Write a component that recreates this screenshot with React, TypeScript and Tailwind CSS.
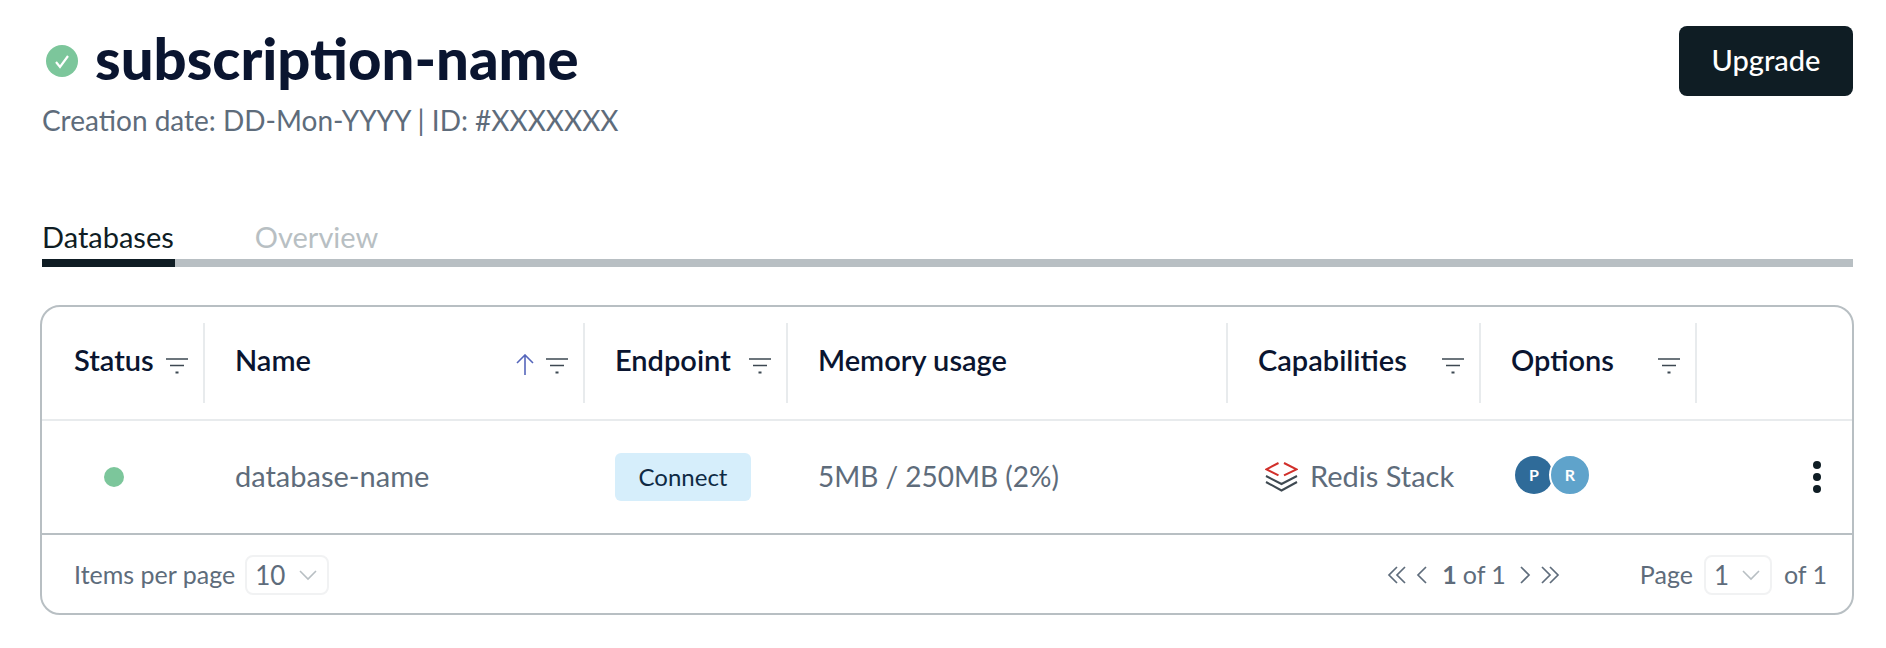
const columns = [
  { label: 'Status', width: 'w-[163px]', filter: true, first: true },
  { label: 'Name', width: 'w-[380px]', filter: true, sorted: true },
  { label: 'Endpoint', width: 'w-[203px]', filter: true },
  { label: 'Memory usage', width: 'w-[440px]', filter: false },
  { label: 'Capabilities', width: 'w-[253px]', filter: true },
  { label: 'Options', width: 'w-[216px]', filter: true },
];

function FilterIcon() {
  return (
    <svg width="22" height="16" viewBox="0 0 22 16" className="mt-[5px] shrink-0 text-[#3d4852]" fill="none" stroke="currentColor" strokeWidth="1.6">
      <path d="M0 1h22M4 7.500h14" />
      <path d="M9.500 14.500h3" strokeWidth="2.200" />
    </svg>
  );
}

function SortUpIcon() {
  return (
    <svg width="20" height="21" viewBox="0 0 20 21" className="mt-[3px] shrink-0 text-[#5566bb]" fill="none" stroke="currentColor" strokeWidth="1.6">
      <path d="M10 21V1M2 9l8-8 8 8" />
    </svg>
  );
}

function Chevron({ dir, double }: { dir: 'left' | 'right'; double?: boolean }) {
  const flip = dir === 'right' ? 'scale-x-[-1]' : '';
  return (
    <svg width={double ? 19 : 11} height="18" viewBox={double ? '0 0 19 18' : '0 0 11 18'} className={`text-[#5e6c7b] ${flip}`} fill="none" stroke="currentColor" strokeWidth="1.7">
      <path d="M10 1 2 9l8 8" />
      {double && <path d="M18 1 10 9l8 8" />}
    </svg>
  );
}

function SmallSelect({ value, width }: { value: string; width: string }) {
  return (
    <div className={`flex h-10 ${width} items-center justify-between rounded-lg border-2 border-[#f1f2f3] pl-2 pr-[10px] text-[26px] text-[#5e6c7b]`}>
      <span>{value}</span>
      <svg width="18" height="11" viewBox="0 0 18 11" fill="none" stroke="#b8bfc3" strokeWidth="1.6">
        <path d="m1 1 8 8 8-8" />
      </svg>
    </div>
  );
}

function RedisIcon() {
  return (
    <svg width="33" height="30" viewBox="0 0 33 30" fill="none" strokeWidth="2">
      <path d="M13.500 1 1.500 7.300l12 6M19 1l12.500 6.300-12.500 6" stroke="#d12f2a" />
      <path d="m1 14 15.500 8L32 14" stroke="#3f4a52" />
      <path d="m1 20 15.500 8.500L32 20" stroke="#3f4a52" />
    </svg>
  );
}

export default function App() {
  return (
    <div className="h-[648px] w-full bg-white pl-[40px] pr-[32px] pt-[26px] font-['Lato',sans-serif] text-[#5e6c7b]">
      <div className="mr-px flex items-start justify-between">
        <div>
          <div className="flex h-[70px] items-center pl-[6px]">
            <span className="flex h-8 w-8 items-center justify-center rounded-full bg-[#7cc69b]">
              <svg width="16" height="15" viewBox="0 0 16 15" fill="none" stroke="white" strokeWidth="2.200">
                <path d="m2 8 4 5 8-11" />
              </svg>
            </span>
            <h1 className="-mt-[7px] ml-[17px] text-[58px] font-black leading-none text-[#0a1530]">subscription-name</h1>
          </div>
          <p className="ml-[2px] mt-[6px] text-[28px] leading-9">Creation date: DD-Mon-YYYY | ID: #XXXXXXX</p>
        </div>
        <button type="button" className="h-[70px] w-[174px] rounded-lg bg-[#0f1d24] pb-[2px] text-[29px] font-medium text-white">
          Upgrade
        </button>
      </div>

      <div className="ml-[2px] mt-[83px] flex gap-[81px] text-[29px] leading-8">
        <span className="text-[#0f1d24]">Databases</span>
        <span className="text-[#b8bfc3]">Overview</span>
      </div>
      <div className="ml-[2px] mr-px mt-[6px] h-2 bg-[#b8bfc3]">
        <div className="h-2 w-[133px] bg-[#0f1d24]" />
      </div>

      <div className="mt-[38px] h-[310px] overflow-hidden rounded-[20px] border-2 border-[#b8bfc3]">
        <div className="flex h-[114px] items-center border-b-2 border-[#e8ebed]">
          {columns.map((col) => (
            <div key={col.label} className={`flex h-20 ${col.width} items-center justify-between border-r-2 border-[#e8ebed] ${col.first ? 'pl-[32px]' : 'pl-[30px]'} pr-[15px]`}>
              <span className="-mt-[6px] text-[29px] font-semibold text-[#0a1530]">{col.label}</span>
              <span className="flex items-center gap-[11px]">
                {col.sorted && <SortUpIcon />}
                {col.filter && <FilterIcon />}
              </span>
            </div>
          ))}
        </div>

        <div className="flex h-[114px] items-center border-b-2 border-[#b8bfc3] text-[29px]">
          <div className="flex w-[163px] justify-center pr-[19px]">
            <span className="h-5 w-5 rounded-full bg-[#7cc69b]" />
          </div>
          <div className="-mt-[3px] w-[380px] pl-[30px]">database-name</div>
          <div className="w-[203px] pl-[30px]">
            <span className="flex h-12 w-[136px] items-center justify-center rounded-md bg-[#d6eefb] text-[24px] text-[#0f2a44]">Connect</span>
          </div>
          <div className="-mt-[3px] w-[440px] pl-[30px] text-[28px]">5MB / 250MB (2%)</div>
          <div className="flex w-[253px] items-center pl-[37px]">
            <RedisIcon />
            <span className="-mt-[3px] ml-3">Redis Stack</span>
          </div>
          <div className="flex w-[216px] pl-[34px]">
            <span className="flex h-[38px] w-[38px] items-center justify-center rounded-full bg-[#2f6b99] text-base font-bold text-white">P</span>
            <span className="-ml-[4px] flex h-[42px] w-[42px] -translate-y-[2px] items-center justify-center rounded-full border-2 border-white bg-[#5fa3cb] text-base font-bold text-white">R</span>
          </div>
          <div className="flex flex-1 justify-end pr-[31px]">
            <div className="flex flex-col gap-1">
              <span className="h-2 w-2 rounded-full bg-[#0f1d24]" />
              <span className="h-2 w-2 rounded-full bg-[#0f1d24]" />
              <span className="h-2 w-2 rounded-full bg-[#0f1d24]" />
            </div>
          </div>
        </div>

        <div className="flex h-[78px] items-center pl-[32px] pr-[25px] pt-[2px] text-[25px]">
          <span>Items per page</span>
          <span className="ml-[10px]">
            <SmallSelect value="10" width="w-[84px]" />
          </span>
          <div className="ml-auto flex items-center">
            <Chevron dir="left" double />
            <span className="ml-[10px]"><Chevron dir="left" /></span>
            <span className="ml-[15px] font-bold">1</span>
            <span className="ml-[6px]">of 1</span>
            <span className="ml-[14px]"><Chevron dir="right" /></span>
            <span className="ml-[10px]"><Chevron dir="right" double /></span>
          </div>
          <span className="ml-[80px]">Page</span>
          <span className="ml-[11px]">
            <SmallSelect value="1" width="w-[68px]" />
          </span>
          <span className="ml-3">of 1</span>
        </div>
      </div>
    </div>
  );
}
